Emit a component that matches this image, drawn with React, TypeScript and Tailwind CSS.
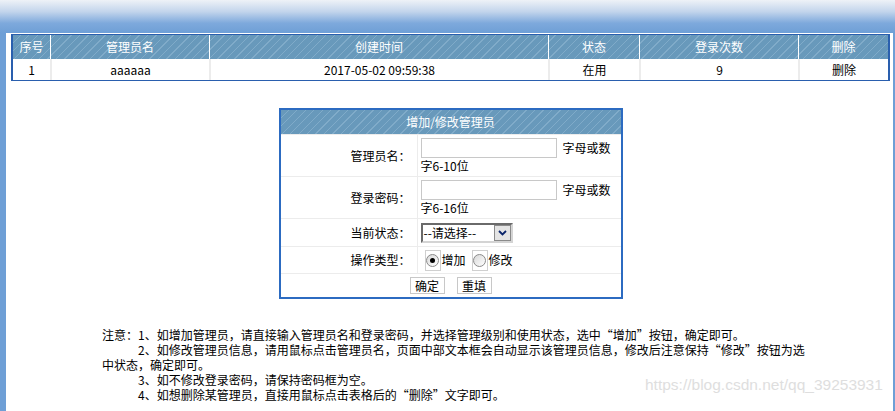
const headCols = [
  { label: "序号", w: "w-[37px]" },
  { label: "管理员名", w: "w-[159px]" },
  { label: "创建时间", w: "w-[339px]" },
  { label: "状态", w: "w-[91px]" },
  { label: "登录次数", w: "w-[159px]" },
  { label: "删除", w: "flex-1" }
];

const row = ["1", "aaaaaa", "2017-05-02 09:59:38", "在用", "9", "删除"];

const stripes =
  "bg-[repeating-linear-gradient(135deg,#6899bb_0px,#6899bb_5px,#80abc9_5px,#80abc9_6px)]";

function cn(...c: string[]) {
  return c.filter(Boolean).join(" ");
}

function Radio({ checked, label }: { checked?: boolean; label: string }) {
  return (
    <span className="flex items-center">
      <span className="flex h-[21px] w-[16px] items-center justify-center border border-[#cfcfcf]">
        <span className="flex h-[13px] w-[13px] items-center justify-center rounded-full border border-[#8a8a8a] bg-[linear-gradient(135deg,#d8d8d8,#ffffff)]">
          {checked && <span className="h-[5px] w-[5px] rounded-full bg-black" />}
        </span>
      </span>
      <span className="ml-px">{label}</span>
    </span>
  );
}

function FormRow({ label, children, h }: { label: string; children: React.ReactNode; h: string }) {
  return (
    <div className={cn("flex border-t border-[#ececec]", h)}>
      <div className="flex w-[137px] shrink-0 items-center justify-end border-r border-[#ececec] pr-[6px]">
        {label}
      </div>
      <div className="flex flex-1 flex-col justify-center pl-[3px]">{children}</div>
    </div>
  );
}

export default function App() {
  return (
    <div className="relative h-[411px] w-[895px] overflow-hidden bg-[#6e9fd6] font-['Noto_Sans_CJK_SC',sans-serif] text-[12px] leading-[14px] text-black">
      <div className="h-[33px] bg-[linear-gradient(to_bottom,#eef2f7_0%,#c3d5ec_35%,#7ea9dc_70%,#6e9fd6_100%)]" />

      <div className="flex h-[378px]">
        <div className="w-[6px] shrink-0" />
        <div className="flex-1 bg-white pl-[5px] pr-[3px] pt-px">
          {/* admin table */}
          <div className="border border-x-2 border-[#2a5fae]">
            <div className={cn("flex h-[24px] text-white", stripes)}>
              {headCols.map((c, i) => (
                <div
                  key={c.label}
                  className={cn("flex items-center justify-center", c.w, i > 0 ? "border-l border-white" : "")}
                >
                  {c.label}
                </div>
              ))}
            </div>
            <div className="flex h-[21px]">
              {row.map((v, i) => (
                <div
                  key={i}
                  className={cn(
                    "flex items-center justify-center",
                    headCols[i].w,
                    i > 0 ? "border-l-2 border-[#ececec]" : ""
                  )}
                >
                  {v}
                </div>
              ))}
            </div>
          </div>

          {/* add / edit form */}
          <div className="mx-auto mt-[27px] w-[344px] border-2 border-[#2c6bc1]">
            <div className={cn("flex h-[24px] items-center justify-center text-white", stripes)}>
              增加/修改管理员
            </div>
            <FormRow label="管理员名：" h="h-[42px]">
              <div className="flex items-center">
                <span className="h-[20px] w-[136px] border border-[#c8c8c8]" />
                <span className="ml-[6px]">字母或数</span>
              </div>
              <div className="mt-px">字6-10位</div>
            </FormRow>
            <FormRow label="登录密码：" h="h-[42px]">
              <div className="flex items-center">
                <span className="h-[20px] w-[136px] border border-[#c8c8c8]" />
                <span className="ml-[6px]">字母或数</span>
              </div>
              <div className="mt-px">字6-16位</div>
            </FormRow>
            <FormRow label="当前状态：" h="h-[28px]">
              <div className="flex h-[20px] w-[92px] items-center border-2 border-[#6a6a6a] border-b-[#d4d4d4] border-r-[#d4d4d4] bg-white">
                <span className="flex-1 pl-px">--请选择--</span>
                <span className="flex h-[16px] w-[17px] items-center justify-center border border-[#8a8a8a] bg-[#e4e4e4]">
                  <svg width="9" height="6" viewBox="0 0 9 6">
                    <path d="M1 1l3.5 3.5L8 1" fill="none" stroke="#0a246a" strokeWidth="1.8" />
                  </svg>
                </span>
              </div>
            </FormRow>
            <FormRow label="操作类型：" h="h-[27px]">
              <div className="flex items-center gap-[6px] pl-[4px]">
                <Radio checked label="增加" />
                <Radio label="修改" />
              </div>
            </FormRow>
            <div className="flex h-[24px] items-center justify-center gap-[12px] border-t border-[#ececec]">
              <span className="flex h-[17px] w-[35px] items-center justify-center border border-[#c8c8c8] bg-white">确定</span>
              <span className="flex h-[17px] w-[35px] items-center justify-center border border-[#c8c8c8] bg-white">重填</span>
            </div>
          </div>

          {/* notes */}
          <div className="ml-[91px] mt-[28px] leading-[15px]">
            <div>注意：1、如增加管理员，请直接输入管理员名和登录密码，并选择管理级别和使用状态，选中“增加”按钮，确定即可。</div>
            <div className="pl-[36px]">2、如修改管理员信息，请用鼠标点击管理员名，页面中部文本框会自动显示该管理员信息，修改后注意保持“修改”按钮为选</div>
            <div>中状态，确定即可。</div>
            <div className="pl-[36px]">3、如不修改登录密码，请保持密码框为空。</div>
            <div className="pl-[36px]">4、如想删除某管理员，直接用鼠标点击表格后的“删除”文字即可。</div>
          </div>
        </div>
        <div className="w-[2px] shrink-0" />
      </div>

      <div className="absolute left-[645px] top-[376px] font-['Liberation_Sans',sans-serif] text-[15.5px] leading-[18px] text-[#dedede]">
        https://blog.csdn.net/qq_39253931
      </div>
    </div>
  );
}
